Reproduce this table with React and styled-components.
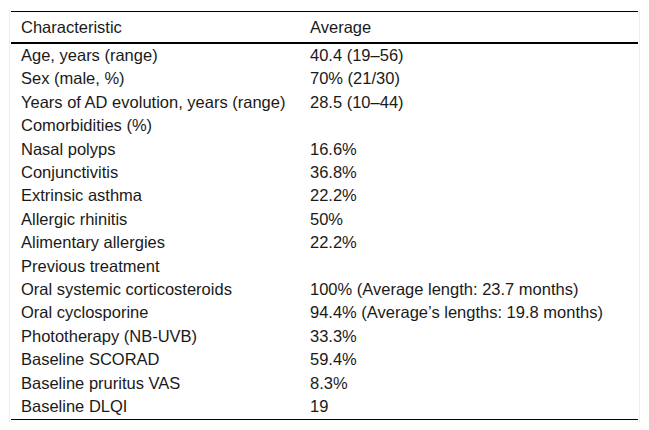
import React from "react";
import styled, { createGlobalStyle } from "styled-components";

const rows = [
  ["Age, years (range)", "40.4 (19–56)"],
  ["Sex (male, %)", "70% (21/30)"],
  ["Years of AD evolution, years (range)", "28.5 (10–44)"],
  ["Comorbidities (%)", ""],
  ["Nasal polyps", "16.6%"],
  ["Conjunctivitis", "36.8%"],
  ["Extrinsic asthma", "22.2%"],
  ["Allergic rhinitis", "50%"],
  ["Alimentary allergies", "22.2%"],
  ["Previous treatment", ""],
  ["Oral systemic corticosteroids", "100% (Average length: 23.7 months)"],
  ["Oral cyclosporine", "94.4% (Average’s lengths: 19.8 months)"],
  ["Phototherapy (NB-UVB)", "33.3%"],
  ["Baseline SCORAD", "59.4%"],
  ["Baseline pruritus VAS", "8.3%"],
  ["Baseline DLQI", "19"],
];

const GlobalStyle = createGlobalStyle`
  body {
    margin: 0;
    background: #fff;
    font-family: "Liberation Sans", Arial, sans-serif;
  }
`;

const Frame = styled.div`
  margin: 10px 0 0 9px;
  width: 628px;
  padding: 1px 0 2px 1px;
  border-left: 1px solid #ececec;
  border-right: 1px solid #ececec;
`;

const Table = styled.table`
  width: 627px;
  border-collapse: collapse;
  border-top: 1px solid #000;
  border-bottom: 1px solid #000;
  color: #1a1a1a;
  font-size: 16.5px;
`;

const HeadCell = styled.th`
  padding: 5px 10px;
  line-height: 20px;
  text-align: left;
  font-weight: normal;
  border-bottom: 2px solid #000;
  width: ${(p) => p.$w || "auto"};
`;

const Cell = styled.td`
  padding: 1px 10px;
  line-height: 21.4px;
  vertical-align: top;
`;

export default function App() {
  return (
    <>
      <GlobalStyle />
      <Frame>
        <Table>
          <thead>
            <tr>
              <HeadCell $w="269px">Characteristic</HeadCell>
              <HeadCell>Average</HeadCell>
            </tr>
          </thead>
          <tbody>
            {rows.map(([name, value]) => (
              <tr key={name}>
                <Cell>{name}</Cell>
                <Cell>{value}</Cell>
              </tr>
            ))}
          </tbody>
        </Table>
      </Frame>
    </>
  );
}
